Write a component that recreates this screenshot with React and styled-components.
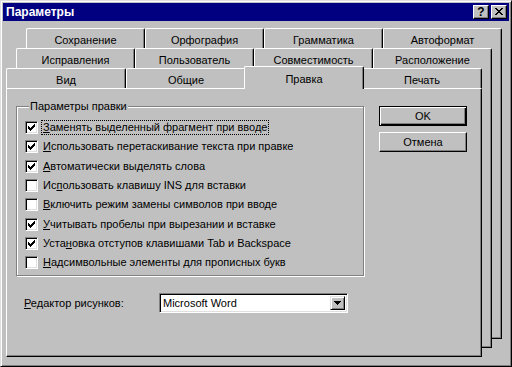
import React from "react";
import styled, { createGlobalStyle } from "styled-components";

const GlobalStyle = createGlobalStyle`
  html, body { margin: 0; padding: 0; background: #c0c0c0; }
  body {
    font-family: "Liberation Sans", Arial, sans-serif;
    font-size: 11px;
    color: #000;
  }
  * { box-sizing: border-box; }
`;

const rows = [
  ["Заменять выделенный фрагмент при вводе", 0, true],
  ["Использовать перетаскивание текста при правке", 0, true],
  ["Автоматически выделять слова", 0, true],
  ["Использовать клавишу INS для вставки", 2, false],
  ["Включить режим замены символов при вводе", 0, false],
  ["Учитывать пробелы при вырезании и вставке", 0, true],
  ["Установка отступов клавишами Tab и Backspace", 4, true],
  ["Надсимвольные элементы для прописных букв", 0, false],
];

const tabRows = [
  ["Сохранение", "Орфография", "Грамматика", "Автоформат"],
  ["Исправления", "Пользователь", "Совместимость", "Расположение"],
  ["Вид", "Общие", "Правка", "Печать"],
];

function Access({ text, at }) {
  return (
    <>
      {text.slice(0, at)}
      <u>{text[at]}</u>
      {text.slice(at + 1)}
    </>
  );
}

function CheckMark() {
  return (
    <svg width="7" height="7" viewBox="0 0 7 7" shapeRendering="crispEdges">
      <path
        fill="#000"
        d="M6 0h1v1h-1z M5 1h2v1h-2z M0 2h1v1h-1z M4 2h3v1h-3z M0 3h2v1h-2z M3 3h3v1h-3z M0 4h5v1h-5z M1 5h3v1h-3z M2 6h1v1h-1z"
      />
    </svg>
  );
}

function CloseGlyph() {
  return (
    <svg width="8" height="7" viewBox="0 0 8 7" shapeRendering="crispEdges">
      <path
        fill="#000"
        d="M0 0h2v1h-2z M6 0h2v1h-2z M1 1h2v1h-2z M5 1h2v1h-2z M2 2h4v1h-4z M3 3h2v1h-2z M2 4h4v1h-4z M1 5h2v1h-2z M5 5h2v1h-2z M0 6h2v1h-2z M6 6h2v1h-2z"
      />
    </svg>
  );
}

function DownArrow() {
  return (
    <svg width="7" height="4" viewBox="0 0 7 4" shapeRendering="crispEdges">
      <path fill="#000" d="M0 0h7v1h-7z M1 1h5v1h-5z M2 2h3v1h-3z M3 3h1v1h-1z" />
    </svg>
  );
}

function TabSheet({ index, children }) {
  return (
    <Sheet $nested={index > 0}>
      <TabRow>
        {tabRows[index].map((t) => (
          <Tab key={t} $active={t === "Правка"}>{t}</Tab>
        ))}
      </TabRow>
      {children}
    </Sheet>
  );
}

export default function App() {
  return (
    <>
      <GlobalStyle />
      <Window>
        <TitleBar>
          <Title>Параметры</Title>
          <CaptionButton>?</CaptionButton>
          <CaptionButton $gap>
            <CloseGlyph />
          </CaptionButton>
        </TitleBar>
        <Body>
          <TabSheet index={0}>
            <BackPage>
              <TabSheet index={1}>
                <BackPage>
                  <TabSheet index={2}>
                    <Panel>
                      <LeftColumn>
                        <GroupBox>
                          <Legend>Параметры правки</Legend>
                          <CheckList>
                            {rows.map(([text, at, checked], i) => (
                              <CheckRow key={text}>
                                <Box>{checked && <CheckMark />}</Box>
                                <CheckLabel $focus={i === 0}>
                                  <Access text={text} at={at} />
                                </CheckLabel>
                              </CheckRow>
                            ))}
                          </CheckList>
                        </GroupBox>
                        <FieldRow>
                          <FieldLabel>
                            <Access text="Редактор рисунков:" at={0} />
                          </FieldLabel>
                          <Combo>
                            <ComboText>Microsoft Word</ComboText>
                            <ComboButton>
                              <DownArrow />
                            </ComboButton>
                          </Combo>
                        </FieldRow>
                      </LeftColumn>
                      <ButtonColumn>
                        <PushButton $default>OK</PushButton>
                        <PushButton>Отмена</PushButton>
                      </ButtonColumn>
                    </Panel>
                  </TabSheet>
                </BackPage>
              </TabSheet>
            </BackPage>
          </TabSheet>
        </Body>
      </Window>
    </>
  );
}

const Window = styled.div`
  width: 512px;
  height: 367px;
  background: #c0c0c0;
  border: 1px solid;
  border-color: #dfdfdf #000 #000 #dfdfdf;
  box-shadow: inset 1px 1px 0 #fff, inset -1px -1px 0 #808080;
  padding: 2px;
  display: flex;
  flex-direction: column;
  overflow: hidden;
`;

const TitleBar = styled.div`
  height: 18px;
  background: #000080;
  display: flex;
  align-items: center;
  padding: 0 2px 0 3px;
`;

const Title = styled.div`
  flex: 1;
  color: #fff;
  font-weight: bold;
  font-size: 12px;
`;

const CaptionButton = styled.div`
  width: 16px;
  height: 14px;
  margin-left: ${(p) => (p.$gap ? "2px" : "0")};
  background: #c0c0c0;
  border: 1px solid;
  border-color: #fff #000 #000 #fff;
  box-shadow: inset -1px -1px 0 #808080;
  display: flex;
  align-items: center;
  justify-content: center;
  font-weight: bold;
  font-size: 12px;
  line-height: 1;
  padding-bottom: 1px;
`;

const Body = styled.div`
  flex: 1;
  padding: 7px 0 0 23px;
`;

const Sheet = styled.div`
  width: 476px;
  display: flex;
  flex-direction: column;
  margin: ${(p) => (p.$nested ? "0 0 -10px -10px" : "0")};
`;

const TabRow = styled.div`
  height: 20px;
  display: flex;
  align-items: flex-end;
`;

const Tab = styled.div`
  flex: 1;
  height: ${(p) => (p.$active ? "23px" : "20px")};
  margin: ${(p) => (p.$active ? "0 -2px -1px -2px" : "0")};
  position: relative;
  z-index: ${(p) => (p.$active ? 2 : 1)};
  background: #c0c0c0;
  border-top: 1px solid #fff;
  border-left: 1px solid #fff;
  border-right: 1px solid #000;
  border-radius: 2px 2px 0 0;
  box-shadow: inset -1px 0 0 #808080;
  display: flex;
  justify-content: center;
  padding-top: ${(p) => (p.$active ? "6px" : "5px")};
  white-space: nowrap;
`;

const BackPage = styled.div`
  background: #c0c0c0;
  border-right: 1px solid #000;
  border-bottom: 1px solid #000;
  box-shadow: inset -1px -1px 0 #808080;
`;

const Panel = styled.div`
  height: 269px;
  background: #c0c0c0;
  border: 1px solid;
  border-color: #fff #000 #000 #fff;
  box-shadow: inset -1px -1px 0 #808080;
  padding: 10px 0 0 9px;
  display: flex;
  gap: 15px;
`;

const LeftColumn = styled.div`
  width: 348px;
  display: flex;
  flex-direction: column;
`;

const GroupBox = styled.fieldset`
  margin: 0;
  min-width: 0;
  padding: 5px 0 2px 8px;
  border: 1px solid #808080;
  box-shadow: inset 1px 1px 0 #fff, 1px 1px 0 #fff;
`;

const Legend = styled.legend`
  margin-left: 4px;
  padding: 0 1px;
  line-height: 14px;
  background: #c0c0c0;
`;

const CheckList = styled.div`
  display: grid;
  grid-auto-rows: 19.33px;
`;

const CheckRow = styled.div`
  display: flex;
  align-items: center;
  gap: 4px;
`;

const Box = styled.div`
  width: 13px;
  height: 13px;
  background: #fff;
  border: 1px solid;
  border-color: #808080 #fff #fff #808080;
  box-shadow: inset 1px 1px 0 #000, inset -1px -1px 0 #dfdfdf;
  display: flex;
  align-items: center;
  justify-content: center;
`;

const CheckLabel = styled.span`
  padding: 0 1px;
  line-height: 13px;
  outline: ${(p) => (p.$focus ? "1px dotted #000" : "none")};
  white-space: nowrap;
`;

const FieldRow = styled.div`
  margin-top: 17px;
  display: flex;
  align-items: center;
`;

const FieldLabel = styled.div`
  width: 143px;
  padding-left: 8px;
`;

const Combo = styled.div`
  width: 189px;
  height: 20px;
  background: #fff;
  border: 1px solid;
  border-color: #808080 #fff #fff #808080;
  box-shadow: inset 1px 1px 0 #000, inset -1px -1px 0 #dfdfdf;
  padding: 2px;
  display: flex;
  align-items: center;
`;

const ComboText = styled.div`
  flex: 1;
  padding-left: 1px;
`;

const ComboButton = styled.div`
  width: 15px;
  height: 14px;
  background: #c0c0c0;
  border: 1px solid;
  border-color: #dfdfdf #000 #000 #dfdfdf;
  box-shadow: inset 1px 1px 0 #fff, inset -1px -1px 0 #808080;
  display: flex;
  align-items: center;
  justify-content: center;
`;

const ButtonColumn = styled.div`
  margin-top: 7px;
  display: flex;
  flex-direction: column;
  gap: 6px;
`;

const PushButton = styled.div`
  width: 88px;
  height: 20px;
  background: #c0c0c0;
  border: 1px solid #000;
  border-color: ${(p) => (p.$default ? "#000" : "#fff #000 #000 #fff")};
  box-shadow: ${(p) =>
    p.$default
      ? "inset 1px 1px 0 #fff, inset -1px -1px 0 #000, inset -2px -2px 0 #808080"
      : "inset -1px -1px 0 #808080"};
  display: flex;
  align-items: center;
  justify-content: center;
`;
